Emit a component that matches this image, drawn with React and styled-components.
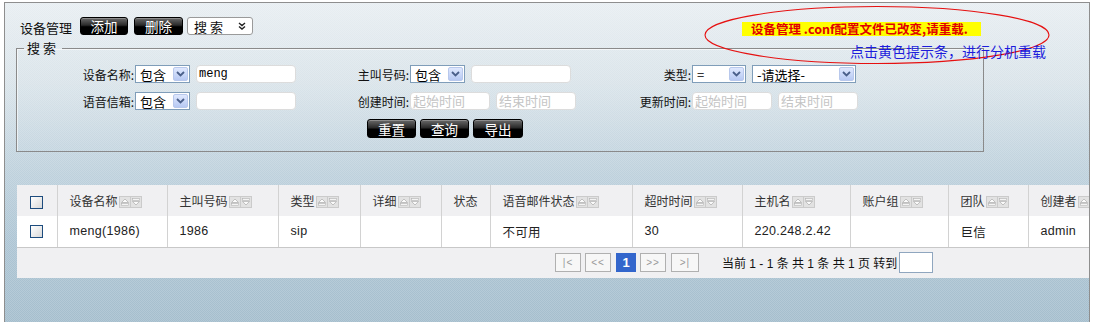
import React from "react";
import styled, { createGlobalStyle } from "styled-components";

const Global = createGlobalStyle`
  html, body { margin: 0; padding: 0; background: #fff; }
  body { font-family: "Liberation Sans", "Noto Sans CJK SC", sans-serif; font-size: 12px; color: #111; }
  * { box-sizing: border-box; }
`;

const Frame = styled.div`
  position: relative;
  margin: 2px 3px 0 4px;
  height: 322px;
  border: 1px solid #8e8e8e;
  overflow: hidden;
  background:
    conic-gradient(rgba(255,255,255,0.16) 25%, transparent 0 50%, rgba(255,255,255,0.16) 0 75%, transparent 0) 0 0 / 2px 2px,
    linear-gradient(to bottom, #e8eef2 0%, #dae4ea 25%, #c1d3de 50%, #adc5d4 75%, #a5becd 100%);
  padding-top: 14px;
`;

const HeaderRow = styled.div`
  display: flex;
  align-items: flex-start;
  padding-left: 15px;
  height: 18px;
`;

const Title = styled.span`
  font-size: 13px;
  line-height: 18px;
  margin-top: 2px;
  color: #111;
  margin-right: 8px;
  font-family: "Noto Sans CJK SC", sans-serif;
`;

const BlackButton = styled.button`
  width: ${p => p.$w || 48}px;
  height: ${p => p.$h || 18}px;
  margin-right: ${p => p.$mr || 0}px;
  padding: 0;
  border: 1px solid #000;
  border-radius: 3px;
  background: linear-gradient(to bottom, #6a6a6a 0%, #2a2a2a 45%, #000 55%, #000 100%);
  color: #fff;
  font-family: "Noto Sans CJK SC", sans-serif;
  font-size: 13.5px;
  line-height: 16px;
  cursor: pointer;
  box-shadow: inset 0 1px 0 rgba(255,255,255,0.25);
`;

const SearchPick = styled.div`
  width: 66px;
  height: 18px;
  display: flex;
  align-items: center;
  justify-content: space-between;
  padding: 0 6px 0 6px;
  background: #fff;
  border: 1px solid #9a9a9a;
  border-radius: 3px;
  font-family: "Noto Sans CJK SC", sans-serif;
  font-size: 13px;
  letter-spacing: 3px;
  color: #111;
`;

const Notice = styled.div`
  margin-left: 489px;
  margin-top: 5px;
  height: 14px;
  width: 239px;
  background: #ffff00;
  color: #e00000;
  font-weight: bold;
  font-size: 12.5px;
  line-height: 14px;
  white-space: nowrap;
  padding-left: 9px;
  font-family: "Noto Sans CJK SC", sans-serif;
  cursor: pointer;
`;

const Ellipse = styled.svg`
  position: absolute;
  left: 698px;
  top: 2px;
  pointer-events: none;
`;

const Hint = styled.div`
  position: absolute;
  left: 845px;
  top: 39px;
  color: #1c1cdc;
  font-size: 14px;
  line-height: 18px;
  font-family: "Noto Sans CJK SC", sans-serif;
  white-space: nowrap;
`;

const Field = styled.fieldset`
  margin: 5px 0 0 11px;
  width: 968px;
  border: 1px solid #8a8a8a;
  box-shadow: inset 1px 1px 0 rgba(255,255,255,0.6);
  padding: 1px 0 13px 0;
  min-width: 0;
`;

const Legend = styled.legend`
  margin-left: 7px;
  padding: 0 3px;
  font-size: 13px;
  line-height: 16px;
  letter-spacing: 3px;
  font-family: "Noto Sans CJK SC", sans-serif;
`;

const FormRow = styled.div`
  display: flex;
  align-items: center;
  height: 18px;
  margin-top: ${p => p.$mt || 0}px;
`;

const Label = styled.div`
  width: ${p => p.$w}px;
  flex-shrink: 0;
  text-align: right;
  padding-right: 1px;
  font-size: 12px;
  font-family: "Noto Sans CJK SC", sans-serif;
  color: #111;
  white-space: nowrap;
`;

const Controls = styled.div`
  width: ${p => p.$w}px;
  flex-shrink: 0;
  display: flex;
  align-items: center;
  gap: 6px;
`;

const SelectBox = styled.div`
  width: ${p => p.$w}px;
  flex-shrink: 0;
  height: 18px;
  display: flex;
  align-items: center;
  justify-content: space-between;
  background: #fff;
  border: 1px solid #7f9db9;
  padding: 0 1px 0 4px;
  font-size: 13px;
  font-family: "Noto Sans CJK SC", sans-serif;
  color: #000;
`;

const ArrowBtn = styled.span`
  width: 15px;
  height: 14px;
  display: flex;
  align-items: center;
  justify-content: center;
  border-radius: 2px;
  background: linear-gradient(to bottom, #dfe8fe, #b7c9f3);
  border: 1px solid #b8c8ec;
`;

const TextInput = styled.div`
  width: ${p => p.$w}px;
  flex-shrink: 0;
  height: 18px;
  background: #fff;
  border: 1px solid #dcdcdc;
  border-radius: 4px;
  padding-left: 2px;
  font-size: ${p => (p.$mono ? "12px" : "13px")};
  line-height: 16px;
  font-family: ${p => (p.$mono ? '"Liberation Mono", monospace' : '"Noto Sans CJK SC", sans-serif')};
  color: ${p => (p.$placeholder ? "#c4c4c4" : "#000")};
`;

const ButtonRow = styled.div`
  display: flex;
  gap: 4px;
  margin: 9px 0 0 350px;
`;

const Panel = styled.div`
  margin: 33px 0 0 12px;
  width: 1091px;
  background: #f0f0f2;
`;

const Table = styled.table`
  border-collapse: collapse;
  table-layout: fixed;
  width: 1091px;
`;

const Th = styled.th`
  width: ${p => p.$w}px;
  height: 31px;
  padding: 0 0 0 ${p => (p.$center ? 0 : 12)}px;
  text-align: ${p => (p.$center ? "center" : "left")};
  font-weight: normal;
  font-size: 12px;
  color: #333;
  background: #f0f0f2;
  border-right: 1px solid #d2d2d2;
  font-family: "Noto Sans CJK SC", sans-serif;
  white-space: nowrap;
`;

const Td = styled.td`
  height: 31px;
  padding: 0 0 0 ${p => (p.$center ? 0 : 12)}px;
  text-align: ${p => (p.$center ? "center" : "left")};
  font-size: 12.5px;
  letter-spacing: 0.3px;
  color: #222;
  background: #fff;
  border-right: 1px solid #d2d2d2;
  border-bottom: 1px solid #c8c8c8;
  font-family: "Liberation Sans", "Noto Sans CJK SC", sans-serif;
  white-space: nowrap;
`;

const Check = styled.span`
  display: inline-block;
  width: 13px;
  height: 13px;
  vertical-align: middle;
  border: 1px solid #1d4c7e;
  background: linear-gradient(135deg, #ffffff 0%, #f0f0f0 40%, #d8d8d8 100%);
`;

const SortIcons = styled.svg`
  vertical-align: middle;
  margin-left: 1px;
  margin-top: -2px;
`;

const Pager = styled.div`
  height: 30px;
  display: flex;
  align-items: center;
  padding-left: 538px;
`;

const PageBtn = styled.span`
  width: ${p => p.$w || 26}px;
  height: 19px;
  margin-right: ${p => p.$mr || 4}px;
  display: flex;
  align-items: center;
  justify-content: center;
  border: 1px solid ${p => (p.$active ? "#3366cc" : "#b0b0b0")};
  background: ${p => (p.$active ? "#3366cc" : "#f7f7f7")};
  color: ${p => (p.$active ? "#fff" : "#999")};
  font-weight: ${p => (p.$active ? "bold" : "normal")};
  font-size: ${p => (p.$active ? "13px" : "10px")};
  letter-spacing: ${p => (p.$active ? 0 : 1)}px;
  font-family: "Liberation Sans", sans-serif;
`;

const PagerText = styled.span`
  margin-left: 19px;
  font-size: 12px;
  color: #111;
  font-family: "Liberation Sans", "Noto Sans CJK SC", sans-serif;
  white-space: nowrap;
`;

const GotoInput = styled.span`
  margin-left: 2px;
  width: 34px;
  height: 21px;
  background: #fff;
  border: 1px solid #8fa6bf;
`;

const Chevron = () => (
  <svg width="9" height="6" viewBox="0 0 9 6">
    <path d="M1 1 L4.5 4.5 L8 1" fill="none" stroke="#4a5f8a" strokeWidth="1.8" />
  </svg>
);

const DoubleChevron = () => (
  <svg width="8" height="8" viewBox="0 0 8 8">
    <path d="M1 1 L4 3.5 L7 1 M1 4.5 L4 7 L7 4.5" fill="none" stroke="#222" strokeWidth="1.4" />
  </svg>
);

const Select = ({ w, value }) => (
  <SelectBox $w={w}>
    <span>{value}</span>
    <ArrowBtn><Chevron /></ArrowBtn>
  </SelectBox>
);

const Sort = () => (
  <SortIcons width="23" height="12" viewBox="0 0 23 12">
    <rect x="0.5" y="0.5" width="11" height="11" fill="#e2e2e2" stroke="#cbcbcb" />
    <path d="M2.5 6.5 L6 3 L9.5 6.5 Z" fill="#fbfbfb" stroke="#b4b4b4" strokeWidth="0.8" />
    <rect x="2.5" y="7.6" width="7" height="1.6" fill="#fbfbfb" stroke="#b4b4b4" strokeWidth="0.6" />
    <rect x="11.5" y="0.5" width="11" height="11" fill="#e2e2e2" stroke="#cbcbcb" />
    <rect x="13.5" y="2.6" width="7" height="1.6" fill="#fbfbfb" stroke="#b4b4b4" strokeWidth="0.6" />
    <path d="M13.5 5.4 L17 9 L20.5 5.4 Z" fill="#fbfbfb" stroke="#b4b4b4" strokeWidth="0.8" />
  </SortIcons>
);

const columns = [
  { w: 40, check: true },
  { w: 110, title: "设备名称", sort: true },
  { w: 111, title: "主叫号码", sort: true },
  { w: 82, title: "类型", sort: true },
  { w: 81, title: "详细", sort: true },
  { w: 49, title: "状态" },
  { w: 142, title: "语音邮件状态", sort: true },
  { w: 110, title: "超时时间", sort: true },
  { w: 108, title: "主机名", sort: true },
  { w: 98, title: "账户组", sort: true },
  { w: 80, title: "团队", sort: true },
  { w: 80, title: "创建者", sort: true },
];

const rowData = ["meng(1986)", "1986", "sip", "", "", "不可用", "30", "220.248.2.42", "", "巨信", "admin"];

export default function App() {
  return (
    <>
      <Global />
      <Frame>
        <HeaderRow>
          <Title>设备管理</Title>
          <BlackButton $mr={6}>添加</BlackButton>
          <BlackButton $w={49} $mr={4}>删除</BlackButton>
          <SearchPick>
            <span>搜索</span>
            <DoubleChevron />
          </SearchPick>
          <Notice>设备管理 .conf配置文件已改变,请重载.</Notice>
        </HeaderRow>

        <Ellipse width="348" height="60" viewBox="0 0 348 60">
          <ellipse cx="174" cy="30" rx="172" ry="28.5" fill="none" stroke="#e61010" strokeWidth="1.1" />
        </Ellipse>
        <Hint>点击黄色提示条，进行分机重载</Hint>

        <Field>
          <Legend>搜索</Legend>
          <FormRow $mt={8}>
            <Label $w={118}>设备名称:</Label>
            <Controls $w={165}>
              <Select w={55} value="包含" />
              <TextInput $w={100} $mono>meng</TextInput>
            </Controls>
            <Label $w={110}>主叫号码:</Label>
            <Controls $w={200}>
              <Select w={55} value="包含" />
              <TextInput $w={100} />
            </Controls>
            <Label $w={82}>类型:</Label>
            <Controls $w={200}>
              <Select w={54} value="=" />
              <Select w={104} value="-请选择-" />
            </Controls>
          </FormRow>
          <FormRow $mt={9}>
            <Label $w={118}>语音信箱:</Label>
            <Controls $w={165}>
              <Select w={55} value="包含" />
              <TextInput $w={100} />
            </Controls>
            <Label $w={110}>创建时间:</Label>
            <Controls $w={200}>
              <TextInput $w={80} $placeholder>起始时间</TextInput>
              <TextInput $w={80} $placeholder>结束时间</TextInput>
            </Controls>
            <Label $w={82}>更新时间:</Label>
            <Controls $w={200}>
              <TextInput $w={80} $placeholder>起始时间</TextInput>
              <TextInput $w={80} $placeholder>结束时间</TextInput>
            </Controls>
          </FormRow>
          <ButtonRow>
            <BlackButton $w={49} $h={19}>重置</BlackButton>
            <BlackButton $w={49} $h={19}>查询</BlackButton>
            <BlackButton $w={50} $h={19}>导出</BlackButton>
          </ButtonRow>
        </Field>

        <Panel>
          <Table>
            <thead>
              <tr>
                {columns.map((c, i) => (
                  <Th key={i} $w={c.w} $center={c.check}>
                    {c.check ? <Check /> : c.title}
                    {c.sort && <Sort />}
                  </Th>
                ))}
              </tr>
            </thead>
            <tbody>
              <tr>
                <Td $center><Check /></Td>
                {rowData.map((v, i) => (
                  <Td key={i}>{v}</Td>
                ))}
              </tr>
            </tbody>
          </Table>
          <Pager>
            <PageBtn $w={26} $mr={4}>|&lt;</PageBtn>
            <PageBtn $w={26} $mr={5}>&lt;&lt;</PageBtn>
            <PageBtn $w={20} $mr={4} $active>1</PageBtn>
            <PageBtn $w={26} $mr={5}>&gt;&gt;</PageBtn>
            <PageBtn $w={28} $mr={0}>&gt;|</PageBtn>
            <PagerText>当前 1 - 1 条 共 1 条 共 1 页 转到</PagerText>
            <GotoInput />
          </Pager>
        </Panel>
      </Frame>
    </>
  );
}
